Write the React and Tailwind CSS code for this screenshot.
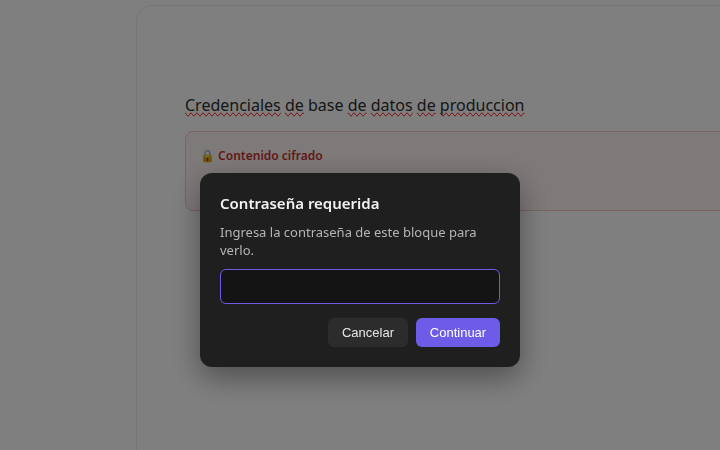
import React from "react";

const sq = "[text-decoration-line:spelling-error]";

export default function App() {
  return (
    <div className="relative h-[450px] w-[720px] overflow-hidden bg-white font-['Noto_Sans',sans-serif]">
      <div className="ml-[136px] mt-[5px] h-[600px] w-[700px] rounded-tl-2xl border border-[#ececec] pl-[48px] pt-[87px]">
        <h1 className="text-[16px] leading-[24px] font-normal text-[#2e2e2e]">
          <span className={sq}>Credenciales</span> <span className={sq}>de</span> base <span className={sq}>de</span>{" "}
          <span className={sq}>datos</span> <span className={sq}>de</span> <span className={sq}>produccion</span>
        </h1>
        <div className="mt-[14px] h-[80px] rounded-lg border border-[#f5c6c6] bg-[#fff5f5] px-[14px] py-[14px]">
          <div className="text-[12px] leading-[20px] font-semibold text-[#c53232]">🔒 Contenido cifrado</div>
        </div>
      </div>

      <div className="absolute inset-0 flex items-start justify-center bg-black/50 pt-[173px] backdrop-blur-[0.5px]">
        <div className="w-[320px] rounded-xl bg-[#1f1f1f] p-5 shadow-[0_10px_30px_rgba(0,0,0,0.4)]">
          <h2 className="text-[15px] leading-[20px] font-semibold text-[#f2f2f2]">Contraseña requerida</h2>
          <p className="mt-[10px] text-[13px] leading-[18px] text-[#b4b4b4]">Ingresa la contraseña de este bloque para verlo.</p>
          <input
            type="password"
            className="mt-[10px] block h-[35px] w-full rounded-md border border-[#6c5ce7] bg-[#141414] px-3 text-[13px] text-white outline-none"
          />
          <div className="mt-[14px] flex justify-end gap-2">
            <button className="h-[29px] w-[80px] rounded-md bg-[#2c2c2c] font-['Liberation_Sans',sans-serif] text-[13px] text-[#e6e6e6]">Cancelar</button>
            <button className="h-[29px] w-[84px] rounded-md bg-[#6c5ce7] font-['Liberation_Sans',sans-serif] text-[13px] text-white">Continuar</button>
          </div>
        </div>
      </div>
    </div>
  );
}
